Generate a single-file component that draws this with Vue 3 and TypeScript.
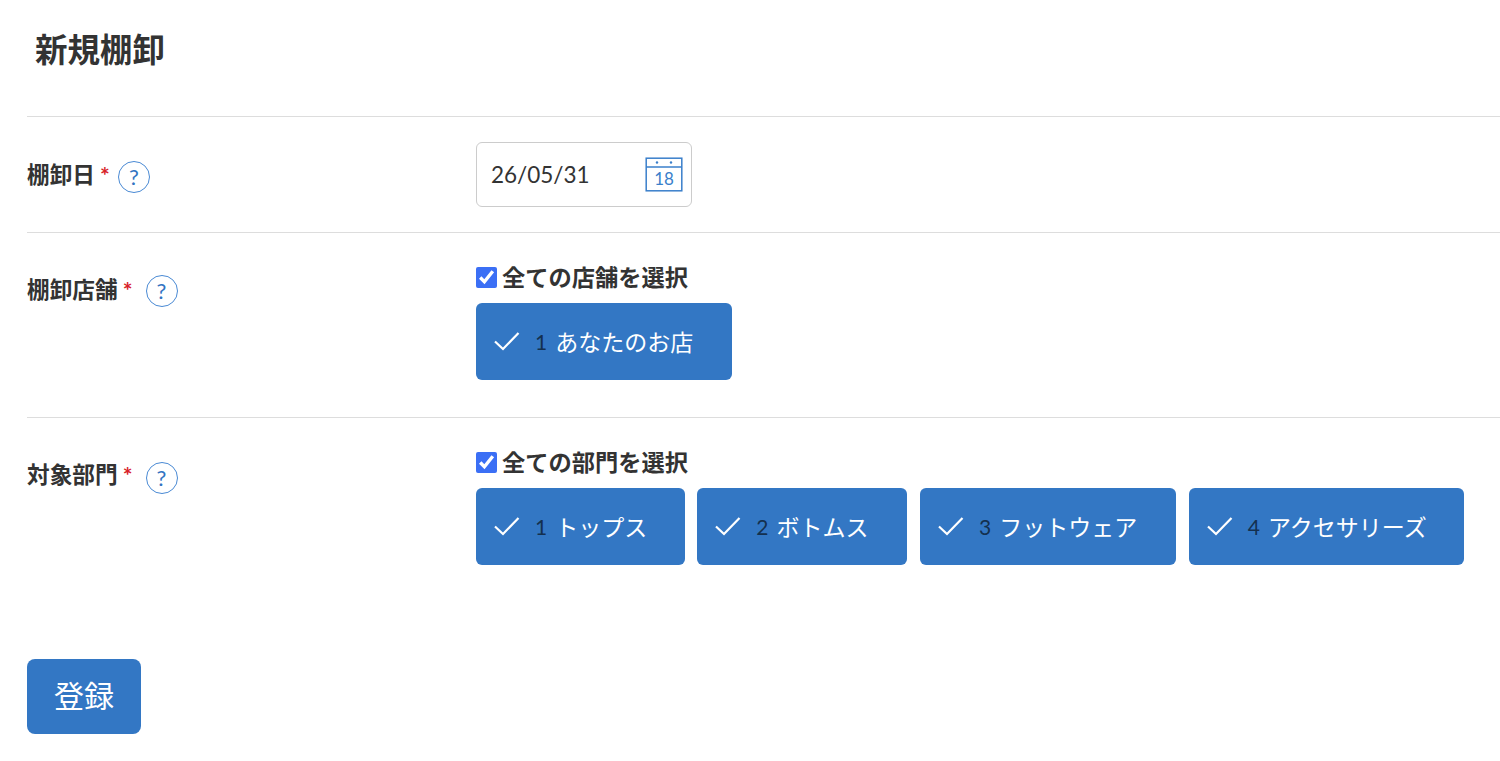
<script setup lang="ts">
interface Item { no: number; name: string; w: number }
const shops: Item[] = [{ no: 1, name: 'あなたのお店', w: 256 }]
const depts: Item[] = [
  { no: 1, name: 'トップス', w: 208.5 },
  { no: 2, name: 'ボトムス', w: 210 },
  { no: 3, name: 'フットウェア', w: 256 },
  { no: 4, name: 'アクセサリーズ', w: 275.5 },
]
</script>

<template>
  <div class="page">
    <h1 class="title">新規棚卸</h1>
    <section class="row row-date">
      <div class="label">
        <span>棚卸日</span><span class="req">*</span><span class="help">?</span>
      </div>
      <div class="date">
        <span>26/05/31</span>
        <svg width="38" height="35" viewBox="0 0 38 35" fill="none" stroke="#3a7fcb" stroke-width="1.5">
          <rect x="1.2" y="1.2" width="35.6" height="32.6" />
          <line x1="1.2" y1="10" x2="36.8" y2="10" />
          <circle cx="12" cy="5.5" r="1.2" fill="#3a7fcb" stroke="none" />
          <circle cx="26" cy="5.5" r="1.2" fill="#3a7fcb" stroke="none" />
          <text x="19" y="28" text-anchor="middle" class="cal-text">18</text>
        </svg>
      </div>
    </section>
    <section class="row row-shop">
      <div class="label">
        <span>棚卸店舗</span><span class="req">*</span><span class="help">?</span>
      </div>
      <div>
        <label class="all"><input type="checkbox" checked />全ての店舗を選択</label>
        <div class="chips">
          <div v-for="s in shops" :key="s.no" class="chip" :style="{ width: s.w + 'px' }">
            <svg width="26" height="20" viewBox="0 0 26 20" fill="none" stroke="#fff" stroke-width="2.2"><path d="M1 10.5 L9 18 L24.5 2" /></svg>
            <span class="no">{{ s.no }}</span><span>{{ s.name }}</span>
          </div>
        </div>
      </div>
    </section>
    <section class="row row-dept">
      <div class="label">
        <span>対象部門</span><span class="req">*</span><span class="help">?</span>
      </div>
      <div>
        <label class="all"><input type="checkbox" checked />全ての部門を選択</label>
        <div class="chips">
          <div v-for="d in depts" :key="d.no" class="chip" :style="{ width: d.w + 'px' }">
            <svg width="26" height="20" viewBox="0 0 26 20" fill="none" stroke="#fff" stroke-width="2.2"><path d="M1 10.5 L9 18 L24.5 2" /></svg>
            <span class="no">{{ d.no }}</span><span>{{ d.name }}</span>
          </div>
        </div>
      </div>
    </section>
    <button class="submit" type="button">登録</button>
  </div>
</template>

<style scoped>
.page {
  width: 1500px;
  height: 761px;
  box-sizing: border-box;
  padding: 0 0 0 27px;
  overflow: hidden;
  background: #fff;
  color: #333;
  font-family: Lato, "Noto Sans CJK JP", sans-serif;
}
.title {
  margin: 0;
  height: 116px;
  box-sizing: border-box;
  padding: 28px 0 0 8px;
  font-size: 32.5px;
  line-height: 44px;
  font-weight: 700;
}
.row {
  display: grid;
  grid-template-columns: 449px 1fr;
  border-top: 1px solid #ddd;
  box-sizing: border-box;
}
.row-date { height: 116px; padding-top: 25px; }
.row-shop { height: 185px; padding-top: 29px; }
.row-dept { height: 242px; padding-top: 29px; }
.row-date .label { padding-top: 18px; }
.row-shop .label, .row-dept .label { padding-top: 13px; }
.label {
  display: flex;
  align-items: flex-start;
  font-size: 22.7px;
  line-height: 30px;
  font-weight: 700;
}
.req {
  color: #d8222a;
  margin-left: 5px;
  font-size: 23px;
}
.help {
  width: 32px;
  height: 32px;
  box-sizing: border-box;
  margin: 1px 0 0 8px;
  border: 1px solid #4a8ad4;
  border-radius: 50%;
  display: flex;
  align-items: center;
  justify-content: center;
  color: #3274c2;
  font-size: 22px;
  font-weight: 400;
  line-height: 1;
}
.row-shop .help { margin-left: 13px; margin-top: 0; }
.row-dept .help { margin-left: 13px; margin-top: 2px; }
.date {
  width: 216px;
  height: 65px;
  box-sizing: border-box;
  border: 1px solid #ccc;
  border-radius: 6px;
  display: flex;
  align-items: center;
  justify-content: space-between;
  padding: 0 8px 0 14px;
  font-size: 22.5px;
}
.cal-text {
  font-family: Lato, sans-serif;
  font-size: 17px;
  fill: #3a7fcb;
  stroke: none;
}
.all {
  display: flex;
  align-items: center;
  height: 30px;
  font-size: 23.25px;
  font-weight: 700;
  line-height: 30px;
}
.all input {
  width: 21px;
  height: 21px;
  margin: 0 5px 0 0;
  accent-color: #3b6ff5;
}
.chips {
  display: flex;
  gap: 12.75px;
  margin-top: 11px;
}
.chip {
  height: 76.5px;
  box-sizing: border-box;
  background: #3377c4;
  border-radius: 6px;
  display: flex;
  align-items: center;
  padding-left: 18px;
  color: #fff;
  font-size: 23px;
}
.no {
  margin: 0 8px 0 15px;
  font-size: 21px;
  color: #14304f;
}
.submit {
  display: block;
  width: 114px;
  height: 75px;
  border: 0;
  border-radius: 8px;
  background: #3377c4;
  color: #fff;
  font-family: inherit;
  font-size: 30px;
  line-height: 40px;
  padding: 0 0 4px;
}
</style>
